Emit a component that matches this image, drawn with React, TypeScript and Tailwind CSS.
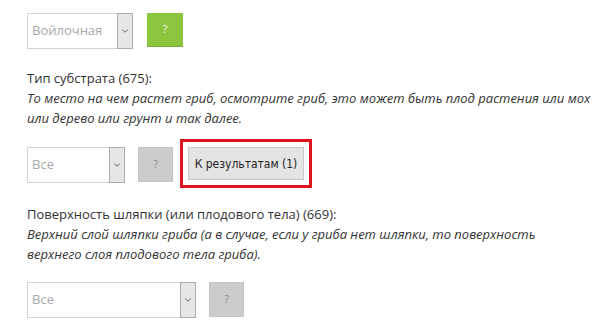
import { ChevronDown } from 'lucide-react';

function Select({ value, width }: { value: string; width: string }) {
  return (
    <div className={`${width} h-[36px] flex border border-[#d4d4d4] bg-white`}>
      <div className="flex-1 flex items-center pl-[4px] text-[13px] text-[#a8a8a8]">{value}</div>
      <div className="w-[16px] flex items-center justify-center bg-[#e6e6e6] border border-[#acacac] -my-px -mr-px">
        <ChevronDown className="w-[10px] h-[10px] text-[#555]" strokeWidth={2.25} />
      </div>
    </div>
  );
}

function HelpButton({ green }: { green?: boolean }) {
  return (
    <button
      className={
        green
          ? 'w-[36px] h-[34px] bg-[#8cc63f] text-[#f4f8e8] text-[11px] border-b border-[#7aa83a]'
          : 'w-[35px] h-[35px] bg-[#cccccc] text-[#8a8a8a] text-[11px] border border-[#c4c4c4]'
      }
    >
      ?
    </button>
  );
}

export default function App() {
  return (
    <div
      className="w-[600px] h-[332px] overflow-hidden bg-white pl-[27px] pt-[13px] text-[#333]"
      style={{ fontFamily: '"Open Sans", "DejaVu Sans", sans-serif' }}
    >
      {/* Row 1 */}
      <div className="flex items-start gap-[14px]">
        <Select value="Войлочная" width="w-[106px]" />
        <HelpButton green />
      </div>

      {/* Substrate */}
      <div className="mt-[19px] w-[565px] text-[13px] leading-[20px]">
        <p>Тип субстрата (675):</p>
        <p className="italic">
          То место на чем растет гриб, осмотрите гриб, это может быть плод растения или мох или дерево или грунт и так далее.
        </p>
      </div>

      <div className="mt-[19px] flex items-start">
        <Select value="Все" width="w-[98px]" />
        <div className="ml-[13px]">
          <HelpButton />
        </div>
        <button
          className="ml-[15px] w-[116px] h-[33px] bg-[#e4e4e4] border border-[#c8c8c8] text-[12px] text-[#222] outline-[3px] outline-solid outline-[#e0141e] outline-offset-[5px]"
          style={{ fontFamily: '"DejaVu Sans Condensed", "DejaVu Sans", sans-serif' }}
        >
          К результатам (1)
        </button>
      </div>

      {/* Cap surface */}
      <div className="mt-[21px] w-[565px] text-[13px] leading-[20px]">
        <p>Поверхность шляпки (или плодового тела) (669):</p>
        <p className="italic">
          Верхний слой шляпки гриба (а в случае, если у гриба нет шляпки, то поверхность верхнего слоя плодового тела гриба).
        </p>
      </div>

      <div className="mt-[18px] flex items-start gap-[13px]">
        <Select value="Все" width="w-[169px]" />
        <HelpButton />
      </div>
    </div>
  );
}
